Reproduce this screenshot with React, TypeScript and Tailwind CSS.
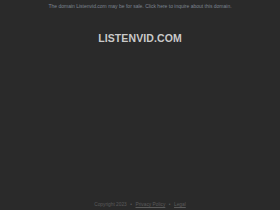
import React from "react";

export default function App() {
  return (
    <div
      className="w-[280px] h-[210px] bg-[#2a2a2a] flex flex-col items-center overflow-hidden"
      style={{ fontFamily: '"Liberation Sans", Arial, sans-serif' }}
    >
      <div className="pt-[4px] text-[5px] leading-[5px] text-[#7d8591] text-center whitespace-nowrap">
        The domain Listenvid.com may be for sale. Click here to inquire about this domain.
      </div>

      <h1 className="mt-[23px] text-[10.5px] leading-[12px] font-bold text-[#c9c9c9] tracking-[0.1px]">
        LISTENVID.COM
      </h1>

      <div className="flex-1" />

      <div className="pb-[2px] flex items-center gap-[3.5px] text-[4.8px] leading-[6px] text-[#5a5a5a] whitespace-nowrap">
        <span>Copyright 2023</span>
        <span>•</span>
        <span className="underline">Privacy Policy</span>
        <span>•</span>
        <span className="underline">Legal</span>
      </div>
    </div>
  );
}
